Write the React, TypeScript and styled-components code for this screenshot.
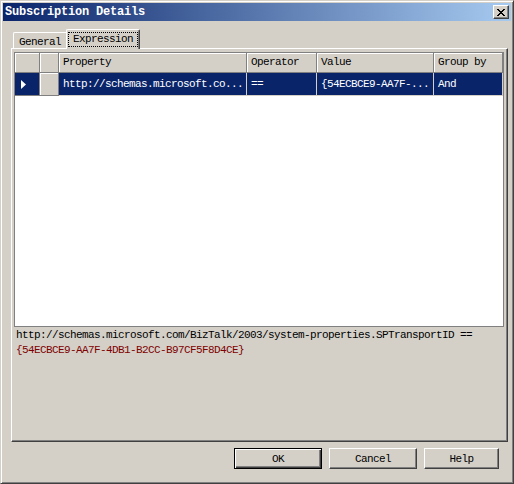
import React from "react";
import styled, { createGlobalStyle } from "styled-components";

const MONO = `"Liberation Mono", "DejaVu Sans Mono", monospace`;

const GlobalStyle = createGlobalStyle`
  html, body { margin: 0; padding: 0; background: #d4d0c8; }
  * { box-sizing: border-box; }
`;

const Window = styled.div`
  width: 514px;
  height: 484px;
  background: #d4d0c8;
  border: 1px solid;
  border-color: #d4d0c8 #404040 #404040 #d4d0c8;
  box-shadow: inset 1px 1px #fff, inset -1px -1px #808080;
  padding: 2px;
  display: flex;
  flex-direction: column;
  font-family: ${MONO};
  font-size: 11px;
  letter-spacing: -0.6px;
  color: #000;
`;

const TitleBar = styled.div`
  height: 18px;
  flex: 0 0 18px;
  background: linear-gradient(to right, #0a246a, #a6caf0);
  display: flex;
  align-items: center;
  justify-content: space-between;
  padding: 0 2px 0 2px;
`;

const TitleText = styled.span`
  color: #fff;
  font-weight: bold;
  font-size: 12px;
  letter-spacing: -0.2px;
  line-height: 18px;
  white-space: pre;
`;

const CloseButton = styled.div`
  width: 16px;
  height: 14px;
  background: #d4d0c8;
  border: 1px solid;
  border-color: #fff #404040 #404040 #fff;
  box-shadow: inset -1px -1px #808080;
  display: flex;
  align-items: center;
  justify-content: center;
  padding-right: 1px;
`;

const Body = styled.div`
  flex: 1 1 auto;
  display: flex;
  flex-direction: column;
  padding: 8px 3px 0 8px;
`;

const TabRow = styled.div`
  display: flex;
  align-items: flex-end;
  height: 19px;
  padding-left: 2px;
  position: relative;
  z-index: 1;
`;

const Tab = styled.div<{ $active?: boolean }>`
  background: #d4d0c8;
  border-left: 1px solid #fff;
  border-top: 1px solid #fff;
  border-top-left-radius: 2px;
  white-space: pre;
  ${(p) =>
    p.$active
      ? `
    width: 74px;
    height: 20px;
    margin-bottom: -1px;
    border-right: 1px solid #404040;
    border-top-right-radius: 2px;
    box-shadow: inset -1px 0 #808080;
    padding: 2px 0 0 1px;
  `
      : `
    width: 53px;
    height: 16px;
    padding: 3px 0 0 5px;
    line-height: 13px;
  `}
`;

const FocusBox = styled.span`
  display: inline-block;
  height: 15px;
  line-height: 13px;
  padding: 0 4px;
  border: 1px dotted #000;
`;

const Panel = styled.div`
  height: 394px;
  flex: 0 0 394px;
  background: #d4d0c8;
  border: 1px solid;
  border-color: #fff #404040 #404040 #fff;
  box-shadow: inset -1px -1px #808080;
  padding: 3px 3px 0 2px;
  display: flex;
  flex-direction: column;
`;

const Grid = styled.div`
  width: 490px;
  height: 275px;
  flex: 0 0 275px;
  background: #fff;
  border: 1px solid #808080;
  display: grid;
  grid-template-columns: 25px 19px 188px 70px 117px 69px;
  grid-template-rows: 20px 23px;
  align-content: start;
`;

const HeadCell = styled.div`
  background: #d4d0c8;
  box-shadow: inset 1px 1px #fff;
  border-right: 1px solid #808080;
  border-bottom: 1px solid #808080;
  padding-left: 4px;
  line-height: 19px;
  white-space: pre;
  overflow: hidden;
`;

const DataCell = styled.div<{ $kind?: "rowhead" | "blank" | "text" }>`
  border-right: 1px solid #d4d0c8;
  border-bottom: 1px solid #d4d0c8;
  line-height: 22px;
  white-space: pre;
  overflow: hidden;
  ${(p) =>
    p.$kind === "blank"
      ? `
    background: #d4d0c8;
    box-shadow: inset 1px 1px #fff;
    border-right-color: #808080;
    border-bottom-color: #808080;
  `
      : p.$kind === "rowhead"
      ? `
    background: #0a246a;
    display: flex;
    align-items: center;
    padding-left: 6px;
    border-right-color: #808080;
    border-bottom-color: #808080;
  `
      : `
    background: #0a246a;
    color: #fff;
    padding-left: 4px;
  `}
`;

const Info = styled.div`
  padding: 1px 0 0 2px;
  line-height: 15px;
`;

const InfoLine = styled.div<{ $red?: boolean }>`
  white-space: pre;
  color: ${(p) => (p.$red ? "#800000" : "#000")};
`;

const ButtonRow = styled.div`
  display: flex;
  justify-content: flex-end;
  gap: 7px;
  margin-top: 6px;
  padding-right: 9px;
`;

const Button = styled.div<{ $default?: boolean; $w: number }>`
  width: ${(p) => p.$w}px;
  height: 21px;
  background: #d4d0c8;
  display: flex;
  align-items: center;
  justify-content: center;
  white-space: pre;
  ${(p) =>
    p.$default
      ? `
    border: 1px solid #000;
    box-shadow: inset 1px 1px #fff, inset -1px -1px #404040, inset -2px -2px #808080;
  `
      : `
    border: 1px solid;
    border-color: #fff #404040 #404040 #fff;
    box-shadow: inset -1px -1px #808080;
  `}
`;

const CloseGlyph = () => {
  const rows = ["XX....XX", ".XX..XX.", "..XXXX..", "...XX...", "..XXXX..", ".XX..XX.", "XX....XX"];
  const rects: React.ReactElement[] = [];
  rows.forEach((r, y) =>
    r.split("").forEach((c, x) => {
      if (c === "X") rects.push(<rect key={`${x}-${y}`} x={x} y={y} width={1} height={1} />);
    })
  );
  return (
    <svg width="8" height="7" viewBox="0 0 8 7" shapeRendering="crispEdges" fill="#000">
      {rects}
    </svg>
  );
};

const RowArrow = () => (
  <svg width="5" height="9" viewBox="0 0 5 9" fill="#fff">
    <polygon points="0,0 5,4.5 0,9" />
  </svg>
);

export default function App() {
  return (
    <>
      <GlobalStyle />
      <Window>
        <TitleBar>
          <TitleText>Subscription Details</TitleText>
          <CloseButton>
            <CloseGlyph />
          </CloseButton>
        </TitleBar>
        <Body>
          <TabRow>
            <Tab>General</Tab>
            <Tab $active>
              <FocusBox>Expression</FocusBox>
            </Tab>
          </TabRow>
          <Panel>
            <Grid>
              <HeadCell />
              <HeadCell />
              <HeadCell>Property</HeadCell>
              <HeadCell>Operator</HeadCell>
              <HeadCell>Value</HeadCell>
              <HeadCell>Group by</HeadCell>
              <DataCell $kind="rowhead">
                <RowArrow />
              </DataCell>
              <DataCell $kind="blank" />
              <DataCell>http://schemas.microsoft.co...</DataCell>
              <DataCell>==</DataCell>
              <DataCell>{"{54ECBCE9-AA7F-..."}</DataCell>
              <DataCell>And</DataCell>
            </Grid>
            <Info>
              <InfoLine>http://schemas.microsoft.com/BizTalk/2003/system-properties.SPTransportID ==</InfoLine>
              <InfoLine $red>{"{54ECBCE9-AA7F-4DB1-B2CC-B97CF5F8D4CE}"}</InfoLine>
            </Info>
          </Panel>
          <ButtonRow>
            <Button $default $w={88}>OK</Button>
            <Button $w={88}>Cancel</Button>
            <Button $w={75}>Help</Button>
          </ButtonRow>
        </Body>
      </Window>
    </>
  );
}
